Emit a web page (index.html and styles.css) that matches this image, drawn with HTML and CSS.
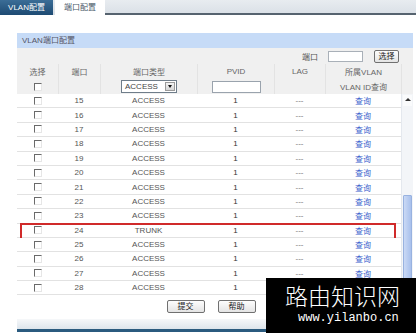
FILE: index.html
```html
<!DOCTYPE html>
<html lang="zh-CN">

<head>
  <meta charset="UTF-8">
  <meta name="viewport" content="width=device-width, initial-scale=1.0">
  <title>端口配置</title>
  <link rel="stylesheet" href="styles.css">
</head>

<body>
  <div class="tabs">
    <div class="tab">VLAN配置</div>
    <div class="tab active">端口配置</div>
    <div class="tab-fill"></div>
  </div>

  <div class="panel">
    <div class="panel-title">VLAN端口配置</div>

    <div class="toolbar">
      <span class="toolbar-label">端口</span>
      <span class="input port-input"></span>
      <span class="btn small">选择</span>
    </div>

    <div class="grid-row head">
      <div>选择</div>
      <div>端口</div>
      <div>端口类型</div>
      <div>PVID</div>
      <div>LAG</div>
      <div>所属VLAN</div>
      <div></div>
    </div>

    <div class="grid-row filter">
      <div><span class="cb"></span></div>
      <div></div>
      <div class="select-cell">
        <span class="select">ACCESS<span class="select-arrow"></span></span>
      </div>
      <div><span class="input pvid-input"></span></div>
      <div></div>
      <div>VLAN ID查询</div>
      <div></div>
    </div>

    <div class="table-body">
      <div class="rows">
        <div class="row"><div><span class="cb"></span></div><div>15</div><div>ACCESS</div><div class="num">1</div><div class="dash">---</div><div class="link">查询</div></div>
        <div class="row"><div><span class="cb"></span></div><div>16</div><div>ACCESS</div><div class="num">1</div><div class="dash">---</div><div class="link">查询</div></div>
        <div class="row"><div><span class="cb"></span></div><div>17</div><div>ACCESS</div><div class="num">1</div><div class="dash">---</div><div class="link">查询</div></div>
        <div class="row"><div><span class="cb"></span></div><div>18</div><div>ACCESS</div><div class="num">1</div><div class="dash">---</div><div class="link">查询</div></div>
        <div class="row"><div><span class="cb"></span></div><div>19</div><div>ACCESS</div><div class="num">1</div><div class="dash">---</div><div class="link">查询</div></div>
        <div class="row"><div><span class="cb"></span></div><div>20</div><div>ACCESS</div><div class="num">1</div><div class="dash">---</div><div class="link">查询</div></div>
        <div class="row"><div><span class="cb"></span></div><div>21</div><div>ACCESS</div><div class="num">1</div><div class="dash">---</div><div class="link">查询</div></div>
        <div class="row"><div><span class="cb"></span></div><div>22</div><div>ACCESS</div><div class="num">1</div><div class="dash">---</div><div class="link">查询</div></div>
        <div class="row"><div><span class="cb"></span></div><div>23</div><div>ACCESS</div><div class="num">1</div><div class="dash">---</div><div class="link">查询</div></div>
        <div class="row marked"><div><span class="cb"></span></div><div>24</div><div>TRUNK</div><div class="num">1</div><div class="dash">---</div><div class="link">查询</div></div>
        <div class="row"><div><span class="cb"></span></div><div>25</div><div>ACCESS</div><div class="num">1</div><div class="dash">---</div><div class="link">查询</div></div>
        <div class="row"><div><span class="cb"></span></div><div>26</div><div>ACCESS</div><div class="num">1</div><div class="dash">---</div><div class="link">查询</div></div>
        <div class="row"><div><span class="cb"></span></div><div>27</div><div>ACCESS</div><div class="num">1</div><div class="dash">---</div><div class="link">查询</div></div>
        <div class="row"><div><span class="cb"></span></div><div>28</div><div>ACCESS</div><div class="num">1</div><div class="dash">---</div><div class="link">查询</div></div>
      </div>

      <div class="scrollbar">
        <div class="sb-btn"><span class="sb-up"></span></div>
        <div class="sb-track"><div class="sb-thumb"></div></div>
        <div class="sb-btn"></div>
      </div>
    </div>

    <div class="actions">
      <span class="btn">提交</span>
      <span class="btn">帮助</span>
    </div>

    <div class="bottom-bar"></div>
  </div>

  <div class="watermark">
    <div class="wm-title">路由知识网</div>
    <div class="wm-url">www.yilanbo.cn</div>
  </div>
</body>

</html>
```

FILE: styles.css
```css
* {
  box-sizing: border-box;
}

body {
  margin: 0;
  position: relative;
  height: 333px;
  overflow: hidden;
  background: #fff;
  font-family: "Liberation Sans", "Noto Sans CJK SC", sans-serif;
  font-size: 8px;
  color: #555;
}

/* top tabs */
.tabs {
  display: flex;
  height: 15px;
  background: linear-gradient(#e8ecf0, #d9dfe6);
}

.tab {
  width: 53px;
  line-height: 15px;
  text-align: center;
  color: #fff;
  background: linear-gradient(#3b6d97, #1d4a72);
}

.tab.active {
  width: 50px;
  margin-left: 2px;
  color: #4a5a6a;
  background: #fff;
}

.tab-fill {
  flex: 1;
  border-bottom: 2px solid #56636f;
}

/* panel */
.panel {
  margin: 18px 3px 0 17px;
}

.panel-title {
  height: 15px;
  line-height: 15px;
  padding-left: 5px;
  background: #c6dbf7;
  color: #556;
}

.toolbar {
  display: flex;
  align-items: center;
  justify-content: flex-end;
  height: 16px;
  padding-right: 14px;
  background: #f0f0f0;
  color: #555;
}

.toolbar-label {
  margin-right: 10px;
}

.input {
  display: inline-block;
  background: #fff;
  border: 1px solid #a9b0b8;
}

.port-input {
  width: 35px;
  height: 11px;
}

.btn {
  display: inline-block;
  width: 38px;
  height: 13px;
  line-height: 11px;
  text-align: center;
  color: #222;
  border: 1px solid #707070;
  border-radius: 2px;
  background: linear-gradient(#fdfdfd, #e4e4e4);
}

.btn.small {
  width: 25px;
  margin-left: 11px;
}

/* table */
.grid-row,
.row {
  display: grid;
  grid-template-columns: 41px 42px 97px 77px 51px 76px;
  align-items: center;
  text-align: center;
}

.grid-row {
  grid-template-columns: 41px 42px 97px 77px 51px 76px 1fr;
  height: 15px;
  background: #f0f0f0;
  color: #666;
}

.grid-row > div {
  height: 100%;
  display: flex;
  align-items: center;
  justify-content: center;
}

.grid-row > div + div {
  border-left: 1px solid #e3e3e3;
}

.select-cell {
  justify-content: flex-start !important;
  padding-left: 20px;
}

.select {
  position: relative;
  display: inline-block;
  width: 56px;
  height: 13px;
  line-height: 11px;
  padding-left: 3px;
  text-align: left;
  color: #444;
  background: #fff;
  border: 1px solid #6f7d8a;
}

.select-arrow {
  position: absolute;
  top: 1px;
  right: 1px;
  width: 10px;
  height: 9px;
  background: linear-gradient(#f4f4f4, #d6d6d6);
  border: 1px solid #9a9a9a;
}

.select-arrow::after {
  content: "";
  position: absolute;
  left: 2px;
  top: 2px;
  border-left: 2px solid transparent;
  border-right: 2px solid transparent;
  border-top: 3px solid #111;
}

.pvid-input {
  width: 49px;
  height: 12px;
  border-color: #9aa3ad;
}

.cb {
  display: inline-block;
  width: 8px;
  height: 8px;
  background: #fff;
  border-top: 1px solid #6a6a6a;
  border-left: 1px solid #6a6a6a;
  border-right: 1px solid #e6e6e6;
  border-bottom: 1px solid #e6e6e6;
}

.table-body {
  display: flex;
}

.rows {
  width: 384px;
}

.row {
  position: relative;
  height: 14.4px;
  background: #fff;
  border-bottom: 1px solid #e2e2e2;
  color: #555;
}

.row > div {
  display: flex;
  align-items: center;
  justify-content: center;
  height: 100%;
}

.row .num {
  color: #333;
}

.row .dash {
  color: #777;
}

.row .link {
  color: #3a5fcd;
}

.row.marked::after {
  content: "";
  position: absolute;
  left: 3px;
  top: -1px;
  width: 372px;
  height: 15px;
  border: 2px solid #d02a2a;
}

/* fake scrollbar */
.scrollbar {
  width: 12px;
  display: flex;
  flex-direction: column;
  padding: 1px;
  background: #f3f5f8;
  border-left: 1px solid #e4e8ee;
}

.sb-btn {
  position: relative;
  height: 11px;
  background: #fafbfc;
}

.sb-up {
  position: absolute;
  left: 2px;
  top: 3px;
  border-left: 3px solid transparent;
  border-right: 3px solid transparent;
  border-bottom: 3px solid #333;
}

.sb-track {
  flex: 1;
  display: flex;
  flex-direction: column;
  justify-content: flex-end;
}

.sb-thumb {
  height: 88px;
  background: linear-gradient(90deg, #cad9f5, #a8c0ec);
  border: 1px solid #98b2e0;
  border-radius: 1px;
}

/* footer */
.actions {
  display: flex;
  justify-content: center;
  gap: 13px;
  padding: 5px 8px 6px 0;
  background: #fff;
}

.bottom-bar {
  height: 13px;
  background: linear-gradient(#f6f8fa, #dde5ec);
  border-bottom: 3px solid #2b5b7f;
}

/* watermark */
.watermark {
  position: absolute;
  left: 266px;
  top: 278px;
  width: 150px;
  height: 55px;
  padding-top: 2px;
  background: #000;
  color: #fff;
}

.wm-title {
  padding-left: 19px;
  font-family: "Noto Sans CJK SC", sans-serif;
  font-weight: 300;
  font-size: 23px;
  line-height: 30px;
}

.wm-url {
  padding-left: 32px;
  font-family: "Liberation Mono", monospace;
  font-size: 12px;
  line-height: 16px;
}
```
